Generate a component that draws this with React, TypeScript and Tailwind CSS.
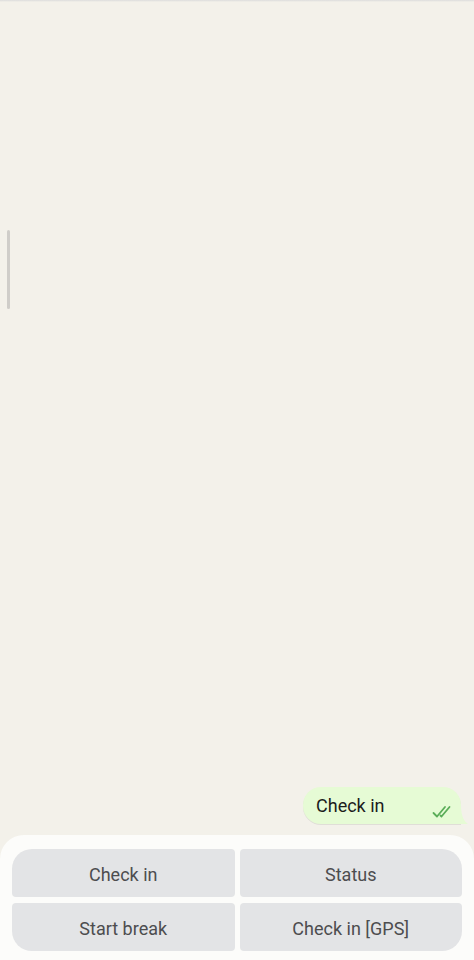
import React from 'react';

const font = { fontFamily: 'Roboto, "Noto Sans", sans-serif' };

function DoubleCheck() {
    return (
        <svg width="22" height="14" viewBox="0 0 22 14" fill="none" stroke="#5aad58" strokeWidth="1.8" strokeLinecap="round" strokeLinejoin="round">
            <path d="M1.5 8 L5 11.5 L13 2" />
            <path d="M8.5 10.5 L9.5 11.5 L17.5 2" />
        </svg>
    );
}

function Bubble({ text }: { text: string }) {
    return (
        <div className="relative">
            <div className="relative z-10 flex h-[37px] w-[158px] items-center rounded-l-[18px] rounded-tr-[18px] bg-[#e6fbd5] pb-[1px] pl-[13px] text-[18px] text-[#1c1c1c] shadow-[0_1px_0_rgba(0,0,0,0.08)]">
                {text}
                <span className="absolute right-[7px] bottom-[5px]">
                    <DoubleCheck />
                </span>
            </div>
            <svg className="absolute -right-[7px] bottom-0 z-10" width="12" height="20" viewBox="0 0 12 20">
                <path d="M0 0 L5 0 C5 8 6 16 12 20 L0 20 Z" fill="#e6fbd5" />
            </svg>
        </div>
    );
}

const keys = [
    { label: 'Check in', round: 'rounded-tl-[20px]' },
    { label: 'Status', round: 'rounded-tr-[20px]' },
    { label: 'Start break', round: 'rounded-bl-[20px]' },
    { label: 'Check in [GPS]', round: 'rounded-br-[20px]' },
];

export default function App() {
    return (
        <div className="relative flex h-[960px] w-full flex-col overflow-hidden bg-[#f3f1ea]" style={font}>
            <div className="h-[2px] w-full bg-gradient-to-b from-[#dcdcdc] to-[#f3f1ea]" />

            {/* scroll thumb */}
            <div className="absolute top-[230px] left-[7px] h-[79px] w-[3px] rounded-full bg-[#cfcdc9]" />

            <div className="flex flex-1 flex-col items-end justify-end pr-[13px] pb-[11px]">
                <Bubble text="Check in" />
            </div>

            <div className="h-[125px] rounded-t-[24px] bg-[#fcfcfa] px-[12px] pt-[14px]">
                <div className="grid grid-cols-2 gap-x-[5px] gap-y-[6px]">
                    {keys.map(k => (
                        <button
                            key={k.label}
                            className={`flex h-[48px] items-center justify-center rounded-[4px] bg-[#e3e4e6] pt-[2px] text-[18px] text-[#4d4d4f] ${k.round}`}
                        >
                            {k.label}
                        </button>
                    ))}
                </div>
            </div>
        </div>
    );
}
